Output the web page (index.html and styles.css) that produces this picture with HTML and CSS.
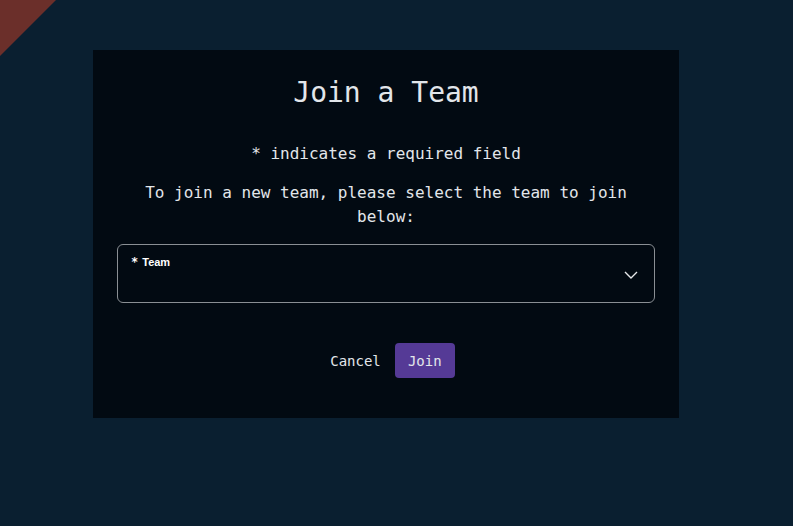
FILE: index.html
```html
<!DOCTYPE html>
<html lang="en">
<head>
    <meta charset="UTF-8">
    <meta name="viewport" content="width=device-width, initial-scale=1.0">
    <title>Join a Team</title>
    <link rel="stylesheet" href="styles.css">
</head>
<body>
    <div class="corner"></div>
    <div class="modal">
        <h2 class="modal-title">Join a Team</h2>
        <p class="note">* indicates a required field</p>
        <p class="intro">To join a new team, please select the team to join below:</p>
        <div class="select-box">
            <label class="select-label" for="team"><span class="req">*</span>Team</label>
            <svg class="chevron" width="14" height="8" viewBox="0 0 14 8">
                <path d="M1 1 L7 7 L13 1" fill="none" stroke="#e6e8ea" stroke-width="1.4"/>
            </svg>
        </div>
        <div class="actions">
            <button class="btn-cancel" type="button">Cancel</button>
            <button class="btn-join" type="submit">Join</button>
        </div>
    </div>
</body>
</html>
```

FILE: styles.css
```css
html, body {
    height: 100%;
}
body {
    margin: 0;
    background-color: #0a1f30;
    font-family: "DejaVu Sans Mono", "Liberation Mono", monospace;
    color: #e2e6ea;
    position: relative;
    overflow: hidden;
    padding-top: 50px;
    box-sizing: border-box;
}
.corner {
    position: absolute;
    top: 0;
    left: 0;
    width: 56px;
    height: 56px;
    background-color: #6b2f2a;
    clip-path: polygon(0 0, 100% 0, 0 100%);
}
.modal {
    width: 586px;
    margin-left: 93px;
    box-sizing: border-box;
    background-color: #020a12;
    padding: 25px 24px 40px;
    text-align: center;
}
.modal-title {
    margin: 0 0 31px;
    font-size: 28px;
    font-weight: normal;
    line-height: 36px;
}
.note {
    margin: 0 0 15px;
    font-size: 16px;
    line-height: 24px;
}
.intro {
    margin: 0 0 15px;
    font-size: 16px;
    line-height: 24px;
}
.select-box {
    height: 59px;
    box-sizing: border-box;
    border: 1px solid #8a8f94;
    border-radius: 6px;
    position: relative;
    text-align: left;
    padding: 10px 13px;
}
.select-label {
    display: block;
    font-family: "Liberation Sans", Arial, sans-serif;
    font-size: 11px;
    font-weight: bold;
    color: #ffffff;
    line-height: 14px;
}
.req {
    font-family: "DejaVu Sans Mono", monospace;
    font-size: 12px;
    margin-right: 4px;
}
.chevron {
    position: absolute;
    right: 16px;
    top: 26px;
}
.actions {
    margin-top: 40px;
    padding-left: 13px;
    display: flex;
    justify-content: center;
    align-items: center;
    gap: 14px;
}
.btn-cancel {
    background: none;
    border: none;
    color: #e2e6ea;
    font-family: inherit;
    font-size: 14px;
    padding: 0;
    cursor: pointer;
}
.btn-join {
    background-color: #553a96;
    color: #e2e6ea;
    font-family: inherit;
    font-size: 14px;
    border: none;
    border-radius: 4px;
    width: 60px;
    height: 35px;
    cursor: pointer;
}
```
